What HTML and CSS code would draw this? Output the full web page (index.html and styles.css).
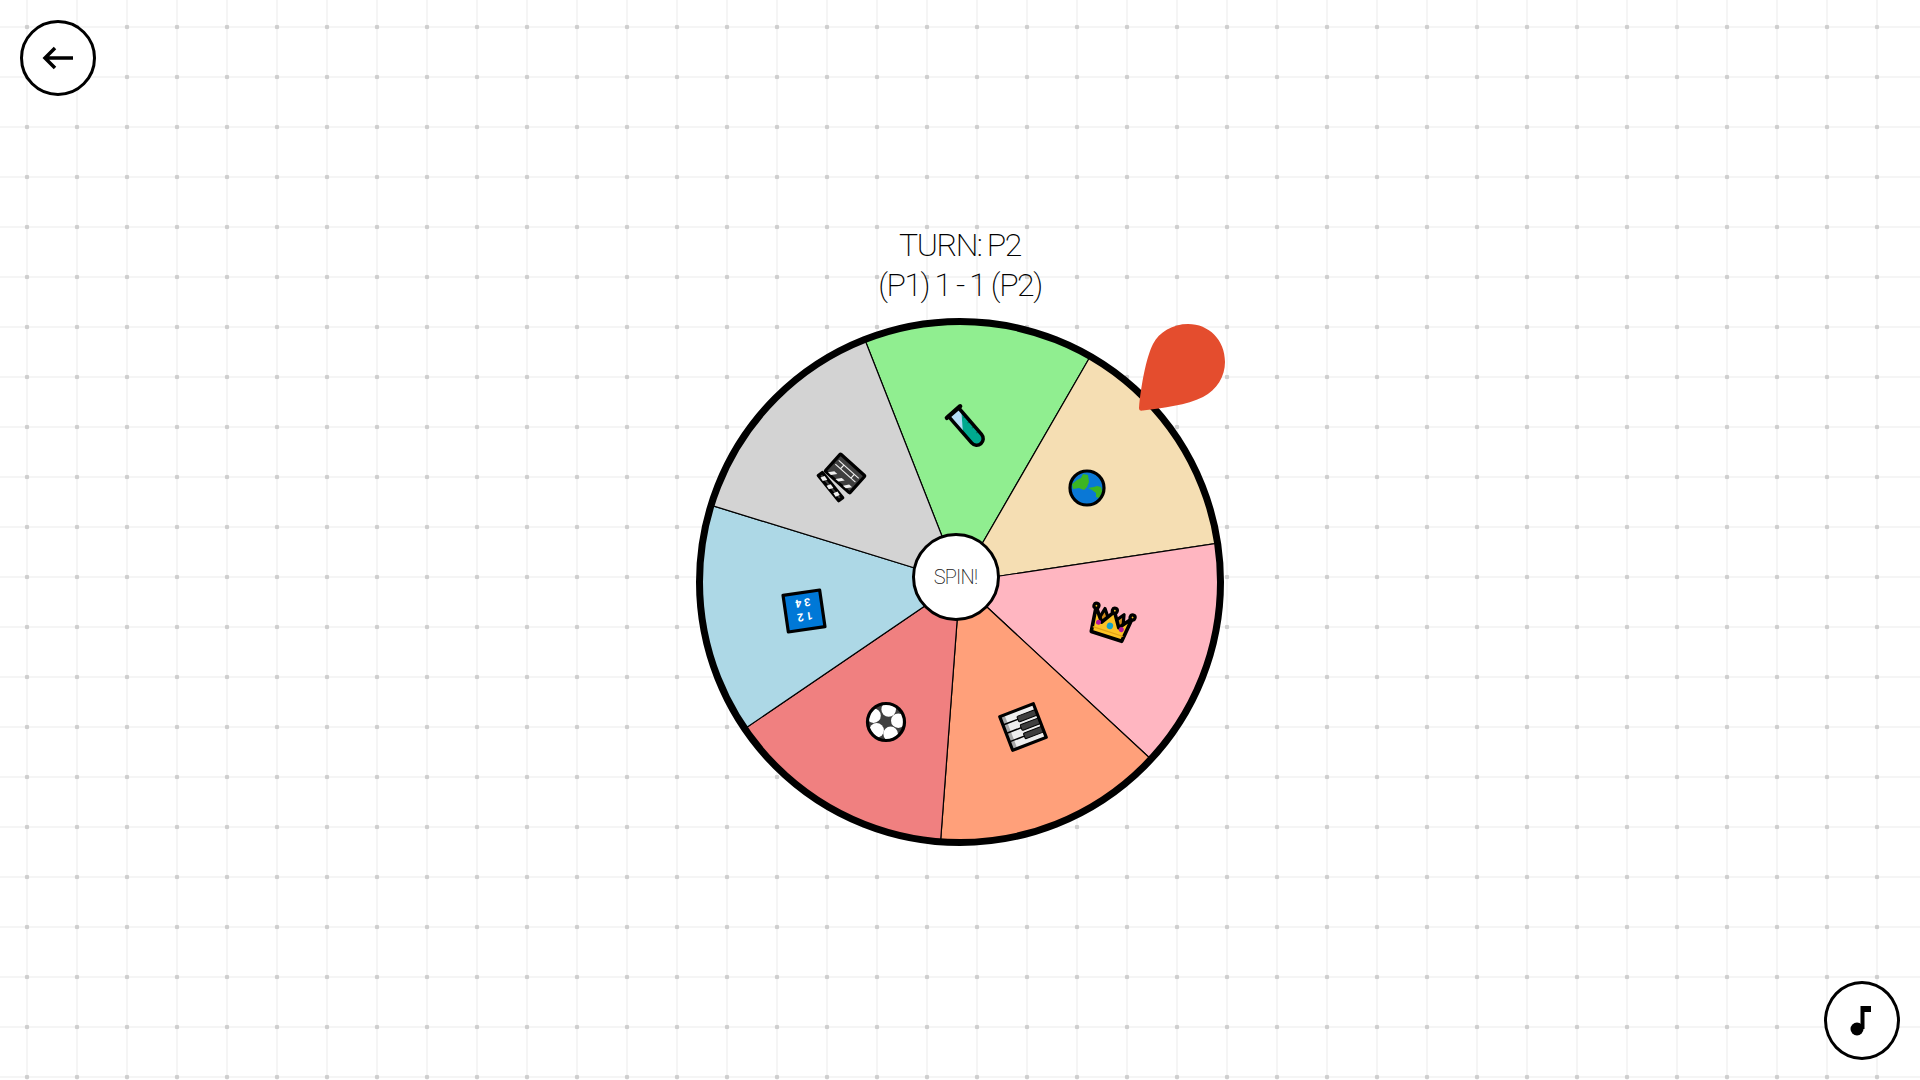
FILE: index.html
```html
<!DOCTYPE html>
<html lang="en">
<head>
<meta charset="utf-8">
<title>Spin the wheel</title>
<link rel="stylesheet" href="styles.css">
</head>
<body>
<button class="round-btn back-btn" aria-label="Back">
  <svg class="btn-icon" width="36" height="30" viewBox="0 0 36 30"><path class="arrow" d="M33 15H5M15 5L5 15L15 25"/></svg>
</button>
<main class="game">
  <div class="status">
    <div>TURN: P2</div>
    <div>(P1) 1 - 1 (P2)</div>
  </div>
  <div class="wheel">
    <svg class="wheel-svg" width="528" height="528" viewBox="-264 -264 528 528">
      <defs><clipPath id="ball"><circle r="18"/></clipPath></defs>
      <g class="spokes">
        <path class="s-green" d="M0 0L-95.4 -243A261 261 0 0 1 130.5 -226Z"/>
        <path class="s-wheat" d="M0 0L130.5 -226A261 261 0 0 1 258.1 -38.9Z"/>
        <path class="s-pink" d="M0 0L258.1 -38.9A261 261 0 0 1 191.3 177.5Z"/>
        <path class="s-salmon" d="M0 0L191.3 177.5A261 261 0 0 1 -19.5 260.3Z"/>
        <path class="s-coral" d="M0 0L-19.5 260.3A261 261 0 0 1 -215.6 147Z"/>
        <path class="s-blue" d="M0 0L-215.6 147A261 261 0 0 1 -249.4 -76.9Z"/>
        <path class="s-gray" d="M0 0L-249.4 -76.9A261 261 0 0 1 -95.4 -243Z"/>
      </g>
      <circle class="rim" r="260.500"/>

      <!-- test tube -->
      <g transform="translate(6.500 -155) rotate(-41) scale(1.1)">
        <path class="tube-liquid" d="M-6 -18H6V14A6 6 0 0 1 -6 14Z"/>
        <path class="tube-glass" d="M-6 -18H6V-14L-6 2Z"/>
        <path class="tube-tick" d="M3 -8H6M3 -2H6M3 4H6M3 10H6"/>
        <path class="outline" d="M-6 -18V14A6 6 0 0 0 6 14V-18"/>
        <path class="outline lip" d="M-8 -18H8"/>
      </g>

      <!-- earth -->
      <g transform="translate(127 -94)">
        <circle class="earth" r="17"/>
        <path class="land" d="M-15 -4L-10 -8L-6 -10L-4 -14L1 -13L2 -6L0 -1L-3 2L-8 0L-14 1ZM1 0L7 -1L10 -2L14 -1L15.500 4L12 10L9 9L9 5L5 2Z"/>
        <circle class="outline" r="17"/>
      </g>

      <!-- crown -->
      <g transform="translate(150.500 42) rotate(18)">
        <path class="crown-back outline" d="M-14 4L-10 -13L-4 -5L0 -8L4 -5L10 -13L14 4Z"/>
        <path class="crown-front outline thick" d="M-19 -12L-9 1L0 -13L9 1L19 -12L16 13H-16Z"/>
        <circle class="crown-front outline" cx="-19" cy="-13" r="2.500"/>
        <circle class="crown-front outline" cx="0" cy="-14" r="2.500"/>
        <circle class="crown-front outline" cx="19" cy="-13" r="2.500"/>
        <path class="crown-band" d="M-16 8H16"/>
        <circle class="gem-m" cx="-12" cy="2" r="2.500"/>
        <circle class="gem-c" cx="0" cy="2" r="3.200"/>
        <circle class="gem-m" cx="12" cy="2" r="2.500"/>
      </g>

      <!-- piano -->
      <g transform="translate(63 145) rotate(-21)">
        <rect class="piano-body" x="-18" y="-18" width="36" height="36"/>
        <rect class="piano-shade" x="-18" y="-18" width="5" height="36"/>
        <path class="piano-line" d="M-18 -9H0M-18 0H0M-18 9H0"/>
        <rect class="piano-key" x="-2" y="-12" width="20" height="6" rx="1"/>
        <rect class="piano-key" x="-2" y="-3" width="20" height="6" rx="1"/>
        <rect class="piano-key" x="-2" y="6" width="20" height="6" rx="1"/>
        <rect class="outline" x="-18" y="-18" width="36" height="36"/>
      </g>

      <!-- soccer ball -->
      <g transform="translate(-74 140)">
        <circle class="ball-dark" r="18"/>
        <g clip-path="url(#ball)">
          <circle class="ball-patch" cx="2.700" cy="-12.500" r="7.300"/>
          <circle class="ball-patch" cx="12.300" cy="-1.300" r="7.300"/>
          <circle class="ball-patch" cx="4.600" cy="11.800" r="7.300"/>
          <circle class="ball-patch" cx="-9.400" cy="8.400" r="7.300"/>
          <circle class="ball-patch" cx="-12.500" cy="-6.300" r="7.300"/>
        </g>
        <circle class="outline" r="18.500"/>
      </g>

      <!-- number tile -->
      <g transform="translate(-156 29) rotate(171.7)">
        <rect class="tile outline-rect" x="-18.500" y="-18.500" width="37" height="37"/>
        <text class="tile-num" x="0" y="-2">1 2</text>
        <text class="tile-num" x="0" y="12">3 4</text>
      </g>

      <!-- clapperboard -->
      <g transform="translate(-117 -107) rotate(42)">
        <rect class="clap outline-rect" x="-16" y="-14" width="33" height="23" rx="1"/>
        <path class="clap-line" d="M-13 -8H14M-13 -3H14M-6 -8V-3M8 -8V-3"/>
        <path class="clap-stripe" d="M-13 8L-9 3H-5L-9 8ZM-3 8L1 3H5L1 8ZM7 8L11 3H15L11 8Z"/>
        <path class="clap outline-rect" d="M-17 12L15 17L14 22L-18 17Z"/>
        <path class="clap-stripe" d="M-13 13L-8.500 14L-11 18L-15 17ZM-3 15L1.500 16L-1 20L-5 19ZM7 16L11 17L9 21L5 20Z"/>
      </g>
    </svg>

    <button class="hub">SPIN!</button>

    <svg class="pointer" width="95" height="95" viewBox="0 0 95 95">
      <path class="pointer-shape" d="M4 88C6 66 11 38 18 24C24 12 38 4 53 4C74 4 90 20 90 42C90 56 82 70 68 77C52 85 28 88 8 90.500C5 91 4 90 4 88Z"/>
    </svg>
  </div>
</main>
<button class="round-btn music-btn" aria-label="Music">
  <svg class="btn-icon" width="30" height="36" viewBox="0 0 30 36"><circle class="note" cx="10" cy="26" r="6.500"/><path class="note" d="M13.500 26V3H24V9H17.500V26Z"/></svg>
</button>
</body>
</html>
```
FILE: styles.css
```css
* { box-sizing: border-box; }
html, body { margin: 0; height: 100%; }
body {
  overflow: hidden;
  font-family: Roboto, "Noto Sans", sans-serif;
  background-color: #fff;
  background-image:
    radial-gradient(circle at 27px 27px, #cfcfcf 0, #cfcfcf 2px, transparent 2.6px),
    linear-gradient(90deg, transparent 26px, #f5f5f5 26px, #f5f5f5 28px, transparent 28px),
    linear-gradient(180deg, transparent 26px, #f5f5f5 26px, #f5f5f5 28px, transparent 28px);
  background-size: 50px 50px;
}
.game {
  display: flex;
  flex-direction: column;
  align-items: center;
  padding-top: 225px;
}
.status {
  font-size: 32px;
  font-weight: 200;
  line-height: 40px;
  letter-spacing: -1.5px;
  word-spacing: -0.8px;
  text-align: center;
  color: #000;
  margin-bottom: 13px;
}
.wheel { position: relative; width: 528px; height: 528px; }
.wheel-svg { display: block; }
.spokes path { stroke: #000; stroke-width: 1.2; }
.s-green { fill: #90ee90; }
.s-wheat { fill: #f5deb3; }
.s-pink { fill: #ffb6c1; }
.s-salmon { fill: #ffa07a; }
.s-coral { fill: #f08080; }
.s-blue { fill: #add8e6; }
.s-gray { fill: #d3d3d3; }
.rim { fill: none; stroke: #000; stroke-width: 7; }
.outline { fill: none; stroke: #000; stroke-width: 3.200; stroke-linecap: round; stroke-linejoin: round; }
.lip { stroke-width: 4; }
.thick { stroke-width: 3.600; }
.outline-rect { stroke: #000; stroke-width: 3.200; stroke-linejoin: round; }
.tube-liquid { fill: #00a98f; }
.tube-glass { fill: #b5dcf6; }
.tube-tick { stroke: #0a6f5f; stroke-width: 1; fill: none; }
.earth { fill: #0a78d6; }
.land { fill: #3cb521; }
.crown-back.outline { fill: #d1891a; }
.crown-front.outline { fill: #fcc325; }
.crown-band { stroke: #e2a116; stroke-width: 1.2; }
.gem-m { fill: #b5179e; }
.gem-c { fill: #17a2c8; }
.piano-body { fill: #eee; }
.piano-shade { fill: #a8a8a8; }
.piano-line { stroke: #000; stroke-width: 1.5; }
.piano-key { fill: #3f3f3f; stroke: #000; stroke-width: 1; }
.ball-dark { fill: #3f3f3f; }
.ball-patch { fill: #fff; }
.tile { fill: #0078d7; }
.tile-num {
  fill: #fff;
  font-size: 11px;
  font-weight: 700;
  text-anchor: middle;
  letter-spacing: 0;
}
.clap { fill: #3f3f3f; }
.clap-line { stroke: #eee; stroke-width: 1.2; fill: none; }
.clap-stripe { fill: #eee; }
.hub {
  position: absolute;
  left: 215.500px;
  top: 214.500px;
  width: 88px;
  height: 88px;
  padding: 0;
  border: 3px solid #000;
  border-radius: 50%;
  background: #fff;
  color: #222;
  font-family: inherit;
  font-size: 20px;
  font-weight: 200;
  letter-spacing: -0.8px;
}
.pointer { position: absolute; left: 439px; top: 2px; }
.pointer-shape { fill: #e44d2e; }
.round-btn {
  position: absolute;
  display: flex;
  align-items: center;
  justify-content: center;
  padding: 0;
  width: 76px;
  border: 3.500px solid #000;
  border-radius: 50%;
  background: #fff;
}
.back-btn { left: 20px; top: 20px; height: 76px; }
.music-btn { left: 1824px; top: 981px; height: 79px; }
.btn-icon { display: block; }
.arrow { fill: none; stroke: #000; stroke-width: 3.500; }
.note { fill: #000; }
```
